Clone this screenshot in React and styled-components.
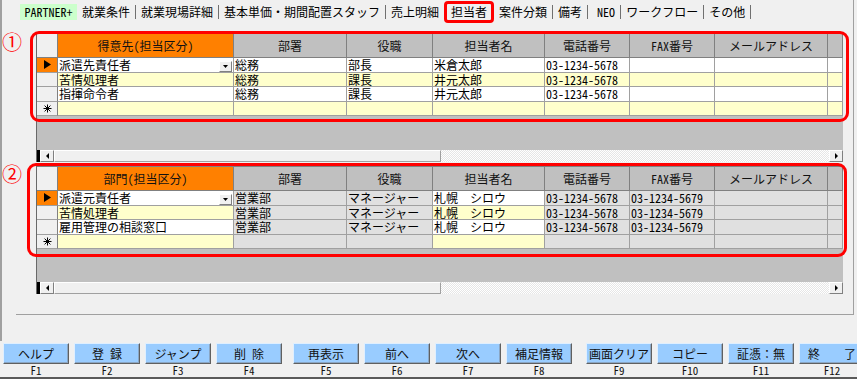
import React from 'react';
import styled, { createGlobalStyle, css } from 'styled-components';

const GlobalStyle = createGlobalStyle`
  html, body { margin: 0; padding: 0; background: #f0f0f0; }
  body {
    font-family: "Noto Sans CJK JP", "Noto Sans", sans-serif;
    font-size: 12px;
    color: #000;
    overflow: hidden;
  }
  #root { width: 857px; height: 379px; }
`;

const COLS = '21px 176px 113px 86px 112px 85px 85px 113px 15px';

const Frame = styled.div`
  width: 857px;
  height: 379px;
  display: flex;
  flex-direction: column;
  overflow: hidden;
`;

const Upper = styled.div`
  height: 341px;
  border-left: 2px solid #a0a0a0;
  box-sizing: border-box;
  display: flex;
  flex-direction: column;
`;

const Panel = styled.div`
  width: 852px;
  height: 315px;
  border-right: 1px solid #a0a0a0;
  box-sizing: border-box;
  display: flex;
  flex-direction: column;
`;

const Hw = styled.span`
  font-feature-settings: "hwid" 1;
`;

const TabBar = styled.div`
  display: flex;
  align-items: center;
  height: 24px;
  padding-left: 18px;
  flex-shrink: 0;
`;

const Tab = styled.div`
  height: 16px;
  line-height: 16px;
  padding: 0 ${p => p.$pr ?? 5}px 0 ${p => p.$pl ?? 5}px;
  white-space: nowrap;
  box-sizing: border-box;
  ${p => p.$variant === 'green' && css`
    width: 57px;
    padding: 0;
    text-align: center;
    background: #ccffcc;
  `}
  ${p => p.$variant === 'active' && css`
    height: 22px;
    line-height: 16px;
    border: 3px solid #ff0000;
    border-radius: 4px;
    padding: 0 4px;
  `}
`;

const Sep = styled.div`
  width: 1px;
  height: 14px;
  background: #707070;
  flex-shrink: 0;
`;

const Section = styled.div`
  position: relative;
  display: flex;
  margin-top: ${p => p.$mt}px;
  flex-shrink: 0;
`;

const Marker = styled.div`
  width: 34px;
  flex-shrink: 0;
  padding: 0;
  box-sizing: border-box;
  color: #ff0000;
  font-size: 20px;
  line-height: 20px;
  margin-top: ${p => p.$mt}px;
`;

const RedFrame = styled.div`
  position: absolute;
  left: ${p => p.$l}px;
  top: ${p => p.$t}px;
  width: ${p => p.$w}px;
  height: ${p => p.$h}px;
  border: 3px solid #ff0000;
  border-radius: 9px;
  box-sizing: border-box;
  pointer-events: none;
`;

const SheetBox = styled.div`
  width: 807px;
  height: ${p => p.$h}px;
  margin-top: ${p => p.$mt}px;
  display: flex;
  flex-direction: column;
  background: #c0c0c0;
  border-left: 1px solid #696969;
  box-sizing: border-box;
`;

const Row = styled.div`
  display: grid;
  grid-template-columns: ${COLS};
  height: ${p => p.$h}px;
  flex-shrink: 0;
`;

const Corner = styled.div`
  background: #f0f0f0;
  border-top: 1px solid #808080;
  border-right: 1px solid #808080;
  border-bottom: 1px solid #808080;
  box-sizing: border-box;
`;

const HeaderCell = styled.div`
  background: ${p => (p.$accent ? '#ff8000' : '#c0c0c0')};
  border-top: 1px solid #808080;
  border-right: 1px solid #808080;
  border-bottom: 1px solid #808080;
  box-sizing: border-box;
  display: flex;
  align-items: center;
  justify-content: center;
  white-space: nowrap;
  line-height: 14px;
  color: #111;
`;

const Selector = styled.div`
  background: ${p => (p.$current ? '#ff8000' : '#f0f0f0')};
  border-right: 1px solid #808080;
  border-bottom: 1px solid #a0a0a0;
  box-sizing: border-box;
  display: flex;
  align-items: center;
  justify-content: center;
`;

const Cell = styled.div`
  background: ${p => p.$bg};
  border-right: 1px solid #a0a0a0;
  border-bottom: 1px solid #a0a0a0;
  box-sizing: border-box;
  padding-left: 1px;
  display: flex;
  align-items: center;
  white-space: nowrap;
  min-width: 0;
`;

const CellText = styled.span`
  flex: 1;
  line-height: 13px;
  height: 13px;
`;

const DropBtn = styled.span`
  width: 13px;
  height: 11px;
  margin: 0 1px 0 0;
  align-self: flex-end;
  background: #f0f0f0;
  border: 1px solid;
  border-color: #ffffff #808080 #808080 #ffffff;
  box-sizing: border-box;
  display: flex;
  align-items: center;
  justify-content: center;
  flex-shrink: 0;
`;

const Empty = styled.div`
  flex: 1;
  background: #c0c0c0;
`;

const ScrollBar = styled.div`
  height: 12px;
  display: flex;
  background: #f0f0f0;
  flex-shrink: 0;
`;

const ScrollStub = styled.div`
  width: 3px;
  background: #000;
`;

const ScrollBtn = styled.div`
  width: 14px;
  background: #f0f0f0;
  border: 1px solid;
  border-color: #ffffff #808080 #808080 #ffffff;
  box-sizing: border-box;
  display: flex;
  align-items: center;
  justify-content: center;
  flex-shrink: 0;
`;

const ScrollThumb = styled.div`
  width: 387px;
  background: #f0f0f0;
  border: 1px solid;
  border-color: #ffffff #a0a0a0 #a0a0a0 #ffffff;
  box-sizing: border-box;
  flex-shrink: 0;
`;

const ScrollTrack = styled.div`
  flex: 1;
  background: repeating-conic-gradient(#ffffff 0 25%, #e6e6e6 0 50%) 0 0 / 2px 2px;
`;

const Spacer = styled.div`
  flex: 1;
`;

const Rule = styled.div`
  margin-left: 14px;
  height: 1px;
  background: #a0a0a0;
  flex-shrink: 0;
`;

const FnBar = styled.div`
  height: 38px;
  display: flex;
  gap: 5px;
  padding: 2px 0 0 3px;
  border-bottom: 2px solid #5a5a5a;
  box-sizing: border-box;
  overflow: hidden;
`;

const FnKey = styled.div`
  width: 66px;
  flex-shrink: 0;
  display: flex;
  flex-direction: column;
  margin-left: ${p => p.$ml || 0}px;
`;

const FnButton = styled.div`
  height: 21px;
  background: #99ccff;
  border: 1px solid;
  border-color: #dfefff #606060 #606060 #dfefff;
  box-shadow: inset -1px -1px 0 #8aa6c4;
  box-sizing: border-box;
  display: flex;
  align-items: center;
  justify-content: center;
  white-space: nowrap;
  line-height: 14px;
  color: #111;
`;

const FnLabel = styled.div`
  height: 12px;
  line-height: 12px;
  font-size: 11px;
  text-align: center;
  font-feature-settings: "hwid" 1;
  color: #111;
`;

const RightTri = ({ w = 7, h = 9 }) => (
  <svg width={w} height={h} viewBox={`0 0 ${w} ${h}`}>
    <polygon points={`0,0 ${w},${h / 2} 0,${h}`} fill="#000" />
  </svg>
);

const LeftTri = () => (
  <svg width="3" height="6" viewBox="0 0 3 6">
    <polygon points="3,0 0,3 3,6" fill="#000" />
  </svg>
);

const DownTri = () => (
  <svg width="5" height="3" viewBox="0 0 5 3">
    <polygon points="0,0 5,0 2.5,3" fill="#000" />
  </svg>
);

const Star = () => (
  <svg width="9" height="9" viewBox="0 0 9 9">
    <g stroke="#000" strokeWidth="1">
      <line x1="4.5" y1="0.5" x2="4.5" y2="8.5" />
      <line x1="0.5" y1="4.5" x2="8.5" y2="4.5" />
      <line x1="1.6" y1="1.6" x2="7.4" y2="7.4" />
      <line x1="7.4" y1="1.6" x2="1.6" y2="7.4" />
    </g>
  </svg>
);

const HEADERS = ['部署', '役職', '担当者名', '電話番号', 'FAX番号', 'メールアドレス', ''];
const HW_HEADERS = new Set([0, 5]);

function Sheet({ title, rows, locked, height, mt }) {
  const headers = [title, ...HEADERS];
  const rowBg = (ri, ci) => {
    if (locked.includes(ci)) return '#e0e0e0';
    return ri % 2 === 0 ? '#ffffff' : '#ffffcc';
  };
  return (
    <SheetBox $h={height} $mt={mt}>
      <Row $h={25}>
        <Corner />
        {headers.map((h, i) => (
          <HeaderCell key={i} $accent={i === 0}>
            {HW_HEADERS.has(i) ? <Hw>{h}</Hw> : h}
          </HeaderCell>
        ))}
      </Row>
      {rows.map((r, ri) => (
        <Row $h={14.5} key={ri}>
          <Selector $current={ri === 0}>{ri === 0 && <RightTri />}</Selector>
          {r.map((v, ci) => (
            <Cell key={ci} $bg={rowBg(ri, ci)}>
              <CellText>{ci === 4 || ci === 5 ? <Hw>{v}</Hw> : v}</CellText>
              {ci === 0 && ri === 0 && (
                <DropBtn>
                  <DownTri />
                </DropBtn>
              )}
            </Cell>
          ))}
        </Row>
      ))}
      <Row $h={14.5}>
        <Selector>
          <Star />
        </Selector>
        {headers.map((_, ci) => (
          <Cell key={ci} $bg={rowBg(3, ci)} />
        ))}
      </Row>
      <Empty />
      <ScrollBar>
        <ScrollStub />
        <ScrollBtn>
          <LeftTri />
        </ScrollBtn>
        <ScrollThumb />
        <ScrollTrack />
        <ScrollBtn>
          <RightTri w={3} h={6} />
        </ScrollBtn>
      </ScrollBar>
    </SheetBox>
  );
}

const GRID1 = [
  ['派遣先責任者', '総務', '部長', '米倉太郎', '03-1234-5678', '', '', ''],
  ['苦情処理者', '総務', '課長', '井元太郎', '03-1234-5678', '', '', ''],
  ['指揮命令者', '総務', '課長', '井元太郎', '03-1234-5678', '', '', ''],
];

const GRID2 = [
  ['派遣元責任者', '営業部', 'マネージャー', '札幌　シロウ', '03-1234-5678', '03-1234-5679', '', ''],
  ['苦情処理者', '営業部', 'マネージャー', '札幌　シロウ', '03-1234-5678', '03-1234-5679', '', ''],
  ['雇用管理の相談窓口', '営業部', 'マネージャー', '札幌　シロウ', '03-1234-5678', '03-1234-5679', '', ''],
];

const KEYS = [
  { label: 'ヘルプ', f: 'F1' },
  { label: '登\u2002録', f: 'F2' },
  { label: 'ジャンプ', f: 'F3' },
  { label: '削\u2002除', f: 'F4' },
  { label: '再表示', f: 'F5', ml: 6 },
  { label: '前へ', f: 'F6' },
  { label: '次へ', f: 'F7' },
  { label: '補足情報', f: 'F8' },
  { label: '画面クリア', f: 'F9', ml: 9 },
  { label: 'コピー', f: 'F10' },
  { label: '証憑：無', f: 'F11' },
  { label: '終\u3000\u3000了', f: 'F12' },
];

export default function App() {
  return (
    <>
      <GlobalStyle />
      <Frame>
        <Upper>
          <Panel>
            <TabBar>
              <Tab $variant="green"><Hw>PARTNER+</Hw></Tab>
              <Tab>就業条件</Tab>
              <Sep />
              <Tab>就業現場詳細</Tab>
              <Sep />
              <Tab>基本単価・期間配置スタッフ</Tab>
              <Sep />
              <Tab>売上明細</Tab>
              <Tab $variant="active">担当者</Tab>
              <Tab>案件分類</Tab>
              <Sep />
              <Tab>備考</Tab>
              <Sep />
              <Tab $pl={9}><Hw>NEO</Hw></Tab>
              <Sep />
              <Tab>ワークフロー</Tab>
              <Sep />
              <Tab>その他</Tab>
              <Sep />
            </TabBar>

            <Section $mt={7}>
              <Marker $mt={1}>①</Marker>
              <Sheet title="得意先(担当区分)" rows={GRID1} locked={[]} height={129} mt={2} />
              <RedFrame $l={28} $t={0} $w={819} $h={91} />
            </Section>

            <Section $mt={1}>
              <Marker $mt={1}>②</Marker>
              <Sheet title="部門(担当区分)" rows={GRID2} locked={[1, 2, 4, 5, 6, 7]} height={128} mt={3} />
              <RedFrame $l={25} $t={0} $w={820} $h={94} />
            </Section>

            <Spacer />
            <Rule />
          </Panel>
        </Upper>
        <FnBar>
          {KEYS.map(k => (
            <FnKey key={k.f} $ml={k.ml}>
              <FnButton>{k.label}</FnButton>
              <FnLabel>{k.f}</FnLabel>
            </FnKey>
          ))}
        </FnBar>
      </Frame>
    </>
  );
}
